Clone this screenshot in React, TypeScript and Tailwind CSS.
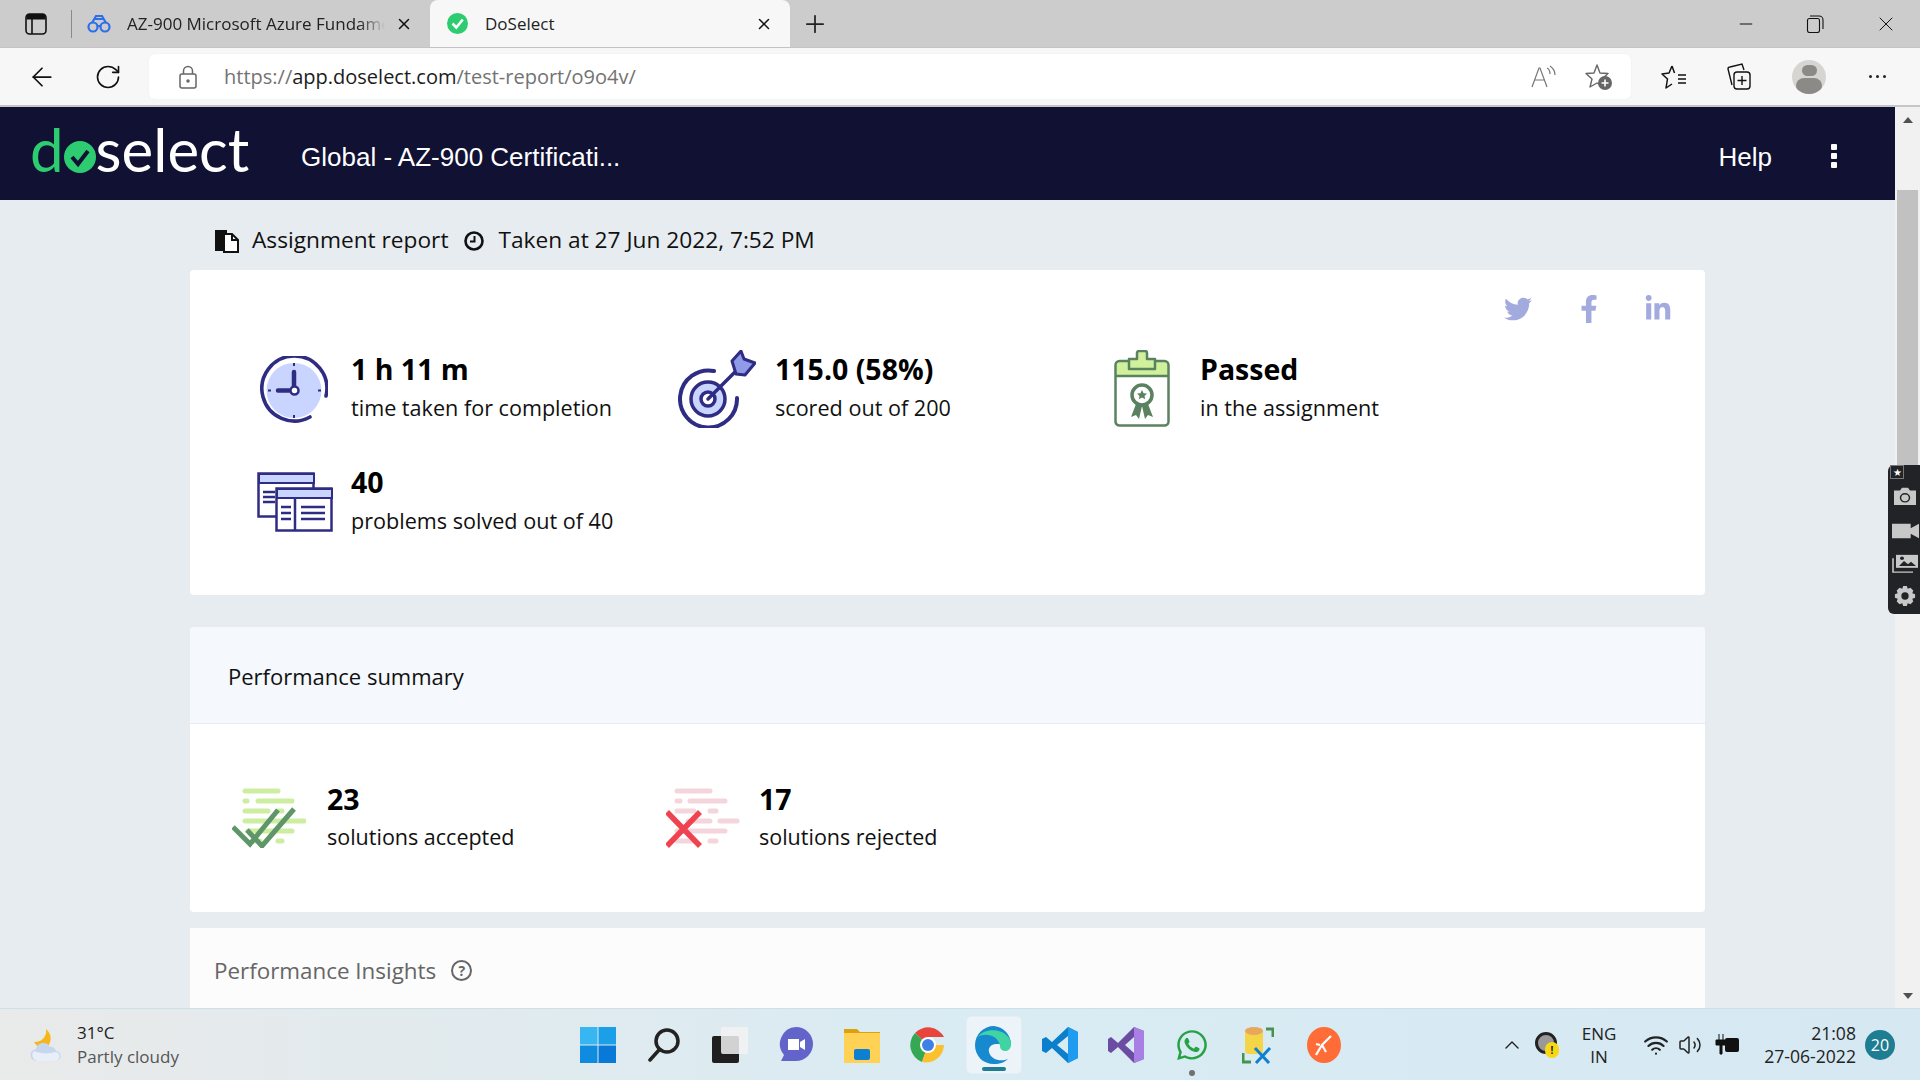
import React from "react";
import {ArrowLeft, RotateCw, X, Plus, Minus, ChevronUp, Volume2, Wifi} from "lucide-react";
import {FaTwitter, FaFacebookF, FaLinkedinIn, FaWhatsapp} from "react-icons/fa";

const INK = "#2f2c84";
const PALE = "#c9d5ff";

const ClockIcon = () => (
  <svg width="68" height="69" viewBox="0 0 68 69" fill="none">
    <circle cx="34" cy="34.5" r="27.5" fill={PALE} />
    <path d="M50 61 A32.500 32.500 0 1 1 66 40" stroke={INK} strokeWidth="3.6" strokeLinecap="round" />
    <path d="M34 16v14M18 34.500h11" stroke={INK} strokeWidth="4.500" strokeLinecap="round" />
    <circle cx="34.500" cy="34.500" r="4" fill="#fff" stroke={INK} strokeWidth="2.500" />
    <path d="M34 7v3M34 59v3M8 34.500h3M58 34.500h3" stroke={INK} strokeWidth="2" />
  </svg>
);

const TargetIcon = () => (
  <svg width="78" height="78" viewBox="0 0 78 78" fill="none">
    <circle cx="30" cy="49" r="17" fill={PALE} stroke={INK} strokeWidth="3.500" />
    <circle cx="30" cy="49" r="7" fill="#fff" stroke={INK} strokeWidth="3.500" />
    <path d="M59 48 A28.500 28.500 0 1 1 36 21" stroke={INK} strokeWidth="4" strokeLinecap="round" />
    <path d="M30 49 L58 21" stroke={INK} strokeWidth="3.500" strokeLinecap="round" />
    <path d="M54 11 L63 1 L66 9 L77 13 L67 25 L58 24Z" fill="#8f9be8" stroke={INK} strokeWidth="3" strokeLinejoin="round" />
  </svg>
);

const ClipboardIcon = () => (
  <svg width="56" height="77" viewBox="0 0 56 77" fill="none">
    <path d="M5 11h46a3 3 0 0 1 3 3v12H2V14a3 3 0 0 1 3-3z" fill="#d0f09b" />
    <rect x="1.500" y="11" width="53" height="64.500" rx="4" stroke="#5a8260" strokeWidth="2.500" />
    <path d="M2 26h52" stroke="#5a8260" strokeWidth="2.500" />
    <path d="M15 19V9h8V3a2 2 0 0 1 2-2h6a2 2 0 0 1 2 2v6h8v10z" fill="#d0f09b" stroke="#5a8260" strokeWidth="2.500" strokeLinejoin="round" />
    <circle cx="28" cy="45" r="10" fill="#fff" stroke="#5a8260" strokeWidth="3.500" />
    <path d="M28 40l1.600 3.200 3.400.4-2.500 2.300.7 3.400-3.200-1.700-3.200 1.700.7-3.400-2.500-2.300 3.400-.4z" fill="#5a8260" />
    <path d="M22 54l-5 13 5-2 3 4 3-13 3 13 3-4 5 2-5-13z" fill="#5a8260" />
  </svg>
);

const WindowsIcon = () => (
  <svg width="76" height="60" viewBox="0 0 76 60" fill="none">
    <rect x="1.500" y="1.500" width="55" height="43" fill="#fff" stroke={INK} strokeWidth="2.500" />
    <rect x="2" y="2" width="55" height="9" fill={PALE} stroke={INK} strokeWidth="2" />
    <path d="M6 20h12M6 25h12M6 30h12" stroke={INK} strokeWidth="2.500" />
    <rect x="19.500" y="16.500" width="55" height="42" fill="#fff" stroke={INK} strokeWidth="2.500" />
    <rect x="20" y="17" width="55" height="9" fill={PALE} stroke={INK} strokeWidth="2" />
    <path d="M38 27v31M24 35h10M24 41h10M24 47h10M44 35h24M44 41h24M44 47h24" stroke={INK} strokeWidth="2.500" />
  </svg>
);

const AcceptedIcon = () => (
  <svg width="74" height="60" viewBox="0 0 74 60" fill="none">
    <path
      d="M13 3h33M13 13h2M26 13h34M13 23h23M46 23h4M13 33h59M16 43h44M22 53h6M46 53h4"
      stroke="#cdeea0"
      strokeWidth="5"
      strokeLinecap="round"
    />
    <path d="M1 39l17 17 28-34M15 42l15 16 32-37" stroke="#5f9669" strokeWidth="5" />
  </svg>
);

const RejectedIcon = () => (
  <svg width="74" height="60" viewBox="0 0 74 60" fill="none">
    <path
      d="M11 3h33M11 13h3M24 13h35M11 23h17M44 23h6M22 33h22M54 33h17M11 43h48M11 53h17M44 53h6"
      stroke="#f5d5dc"
      strokeWidth="5"
      strokeLinecap="round"
    />
    <path d="M1 24l33 34M34 24L1 58" stroke="#ef4350" strokeWidth="5.500" />
  </svg>
);

const Stat = ({icon, value, label}: {icon: React.ReactNode; value: string; label: string}) => (
  <div className="flex items-center h-[113px]">
    <div className="w-[94px] shrink-0 flex justify-start">{icon}</div>
    <div className="flex flex-col gap-[10px] -mt-[1px]">
      <div className="text-[28.5px] leading-[30px] font-bold text-black">{value}</div>
      <div className="text-[21.6px] leading-[28px] text-[#111]">{label}</div>
    </div>
  </div>
);

const SummaryStat = ({icon, value, label, width}: {icon: React.ReactNode; value: string; label: string; width: string}) => (
  <div className={`flex items-center ${width}`}>
    <div className="w-[95px] shrink-0">{icon}</div>
    <div className="flex flex-col gap-[9px] -mt-[2px]">
      <div className="text-[28.5px] leading-[30px] font-bold text-black">{value}</div>
      <div className="text-[21.5px] leading-[28px] text-[#111]">{label}</div>
    </div>
  </div>
);

const TabBar = () => (
  <div className="h-[48px] bg-[#cccccc] flex items-end shrink-0 border-b border-[#c4c4c4]">
    <div className="h-full w-[71px] flex items-center pl-[25px] border-r-0">
      <svg width="22" height="22" viewBox="0 0 22 22" fill="none">
        <rect x="1" y="1" width="20" height="20" rx="3.500" stroke="#111" strokeWidth="1.600" />
        <path d="M1.500 3.500a2.500 2.500 0 0 1 2.500-2.500h14a2.500 2.500 0 0 1 2.500 2.500v3h-19z" fill="#111" />
        <path d="M7 6v15" stroke="#111" strokeWidth="1.600" />
      </svg>
    </div>
    <div className="h-[28px] w-px bg-[#8a8a8a] self-center" />
    <div className="h-full w-[358px] flex items-center pl-[15px] pr-[17px]">
      <svg width="24" height="20" viewBox="0 0 24 20" fill="none" stroke="#2d6fe8" strokeWidth="2.200">
        <circle cx="6" cy="13" r="4.500" />
        <circle cx="18" cy="13" r="4.500" />
        <path d="M10 12h4M5 9l4-7h6l4 7M8 5h8" />
      </svg>
      <div className="ml-[16px] w-[258px] overflow-hidden whitespace-nowrap text-[17px] text-[#222] [mask-image:linear-gradient(to_right,black_90%,transparent)]">AZ-900 Microsoft Azure Fundamentals</div>
      <X size={18} strokeWidth={2} className="ml-auto text-[#111]" />
    </div>
    <div className="h-full w-[360px] bg-[#f7f7f7] rounded-t-[8px] flex items-center pl-[17px] pr-[17px]">
      <svg width="21" height="21" viewBox="0 0 21 21">
        <circle cx="10.500" cy="10.500" r="10.500" fill="#2ecc71" />
        <path d="M5.500 10.500l3.800 4 6.500-8" stroke="#fff" strokeWidth="2.600" fill="none" />
      </svg>
      <span className="ml-[17px] text-[17px] text-[#222]">DoSelect</span>
      <X size={18} strokeWidth={2} className="ml-auto text-[#111]" />
    </div>
    <div className="h-full flex items-center ml-[11px]">
      <Plus size={28} strokeWidth={1.5} className="text-[#222]" />
    </div>
    <div className="h-full flex items-center ml-auto pr-[22px]">
      <Minus size={20} strokeWidth={1.2} className="text-[#111]" />
      <svg className="ml-[50px]" width="18" height="18" viewBox="0 0 18 18" fill="none" stroke="#111" strokeWidth="1.100">
        <rect x="1.500" y="3.500" width="12" height="14" rx="2" />
        <path d="M4 1h9a4 4 0 0 1 4 4v9" />
      </svg>
      <X size={24} strokeWidth={1} className="ml-[50px] text-[#111]" />
    </div>
  </div>
);

const ToolBar = () => (
  <div className="h-[59px] bg-[#f7f7f7] flex items-center shrink-0 border-b-2 border-[#c6c6c6]">
    <ArrowLeft size={30} strokeWidth={1.4} className="ml-[27px] text-[#111]" />
    <RotateCw size={28} strokeWidth={1.4} className="ml-[37px] text-[#111]" />
    <div className="ml-[27px] w-[1482px] h-[45px] bg-white rounded-[6px] flex items-center pl-[30px] pr-[18px] shadow-[0_0_2px_rgba(0,0,0,0.06)]">
      <svg width="18" height="24" viewBox="0 0 18 24" fill="none" stroke="#666" strokeWidth="1.500">
        <rect x="1" y="9" width="16" height="14" rx="2" />
        <path d="M4.500 9V6a4.500 4.500 0 0 1 9 0v3" />
        <circle cx="9" cy="16" r="1" fill="#666" />
      </svg>
      <div className="ml-[27px] text-[20px] whitespace-nowrap text-[#737373]">
        https://<span className="text-[#1c1c1c]">app.doselect.com</span>/test-report/o9o4v/
      </div>
      <div className="ml-auto flex items-center gap-[28px]">
        <svg width="26" height="24" viewBox="0 0 26 24" fill="none" stroke="#777" strokeWidth="1.200">
          <path d="M1 22L8 3h1l7 19M4 15h10M16 3c2 1 3 4 3 6M19 1c3 2 5 5 5 9" />
        </svg>
        <svg width="28" height="28" viewBox="0 0 28 28" fill="none">
          <path d="M12 2l3 8 8 .5-6 5.500 2 8-7-4-7 4 2-8-6-5.500 8-.5z" stroke="#666" strokeWidth="1.400" strokeLinejoin="round" />
          <circle cx="20" cy="20" r="7" fill="#666" />
          <path d="M20 16.500v7M16.500 20h7" stroke="#fff" strokeWidth="1.600" />
        </svg>
      </div>
    </div>
    <svg className="ml-[30px]" width="26" height="26" viewBox="0 0 26 26" fill="none" stroke="#111" strokeWidth="1.500">
      <path d="M11 2l2.500 7M11 2L8 9l-7 1 5.500 5L5 24l6-4" strokeLinejoin="round" />
      <path d="M17 11h8M17 15h8M17 19h8" />
    </svg>
    <svg className="ml-[39px]" width="26" height="28" viewBox="0 0 26 28" fill="none" stroke="#111" strokeWidth="1.400">
      <path d="M6 22 2 6a2 2 0 0 1 2-2l12-3 2 6" />
      <rect x="8" y="9" width="16" height="17" rx="3" />
      <path d="M16 13v9M11.500 17.500h9" />
    </svg>
    <div className="ml-[40px] w-[34px] h-[34px] rounded-full bg-[#d6d5d1] overflow-hidden flex flex-col items-center">
      <div className="mt-[5px] w-[15px] h-[15px] rounded-full bg-[#8c8a87]" />
      <div className="mt-[2px] w-[26px] h-[20px] rounded-full bg-[#8c8a87]" />
    </div>
    <div className="ml-[43px] flex gap-[4px]">
      <i className="block w-[3px] h-[3px] rounded-full bg-[#222]" />
      <i className="block w-[3px] h-[3px] rounded-full bg-[#222]" />
      <i className="block w-[3px] h-[3px] rounded-full bg-[#222]" />
    </div>
  </div>
);

const AppHeader = () => (
  <header className="h-[93px] bg-[#101133] flex items-center pl-[30px] pr-[58px] shrink-0">
    <div className="flex items-center text-[60px] leading-none font-normal font-['Lato',sans-serif] w-[271px] -mt-[10px]">
      <span className="text-[#2ecc71]">d</span>
      <svg className="mt-[16px]" width="32" height="32" viewBox="0 0 32 32">
        <circle cx="16" cy="16" r="16" fill="#2ecc71" />
        <path d="M8 16l6 7 10-13" stroke="#101133" strokeWidth="4" fill="none" />
      </svg>
      <span className="text-white">select</span>
    </div>
    <div className="mt-[7px] text-[26px] text-white font-['Liberation_Sans',sans-serif]">Global - AZ-900 Certificati...</div>
    <div className="mt-[7px] ml-auto text-[26px] text-white font-['Liberation_Sans',sans-serif]">Help</div>
    <div className="mt-[5px] ml-[59px] flex flex-col gap-[3px]">
      <i className="block w-[6px] h-[6px] rounded-[1px] bg-white" />
      <i className="block w-[6px] h-[6px] rounded-[1px] bg-white" />
      <i className="block w-[6px] h-[6px] rounded-[1px] bg-white" />
    </div>
  </header>
);

const ReportBody = () => (
  <div className="flex-1 bg-[#e7ecf0] px-[190px] overflow-hidden font-['Open_Sans',sans-serif]">
    <div className="h-[70px] pt-[11px] flex items-center pl-[24px] text-[22.7px] text-[#111]">
      <svg width="25" height="24" viewBox="0 0 25 24">
        <path d="M1 1h12v3H9v18H1z" fill="#111" />
        <path d="M10 5h8l6 6v12H10z" fill="#fff" stroke="#111" strokeWidth="2" />
        <path d="M18 5v6h6" fill="none" stroke="#111" strokeWidth="2" />
      </svg>
      <span className="ml-[13px]">Assignment report</span>
      <svg className="ml-[16px]" width="20" height="20" viewBox="0 0 20 20" fill="none" stroke="#111">
        <circle cx="10" cy="10" r="8.500" strokeWidth="2.600" />
        <path d="M10.500 5v5.500H6" strokeWidth="2" />
      </svg>
      <span className="ml-[14px]">Taken at 27 Jun 2022, 7:52 PM</span>
    </div>

    <section className="relative h-[325px] bg-white rounded-[4px] pl-[67px] pt-[62px] mb-[32px]">
      <div className="absolute top-[25px] right-[33px] flex items-center text-[#a3aadd]">
        <FaTwitter size={28} />
        <FaFacebookF size={28} className="ml-[43px]" />
        <FaLinkedinIn size={28} className="ml-[41px]" />
      </div>
      <div className="grid grid-cols-[424px_425px_1fr]">
        <Stat icon={<div className="pl-[3px] pt-[3px]"><ClockIcon /></div>} value="1 h 11 m" label="time taken for completion" />
        <Stat icon={<div className="ml-[-3px]"><TargetIcon /></div>} value="115.0 (58%)" label="scored out of 200" />
        <Stat icon={<div className="pl-[8px]"><ClipboardIcon /></div>} value="Passed" label="in the assignment" />
        <Stat icon={<WindowsIcon />} value="40" label="problems solved out of 40" />
      </div>
    </section>

    <section className="h-[285px] bg-white rounded-[4px] mb-[16px] overflow-hidden">
      <div className="h-[97px] pt-[2px] bg-[#f5f8fc] border-b border-[#e8ecf0] flex items-center pl-[38px] text-[22px] text-[#111]">
        Performance summary
      </div>
      <div className="h-[188px] pl-[42px] flex items-center">
        <SummaryStat icon={<AcceptedIcon />} value="23" label="solutions accepted" width="w-[432px]" />
        <SummaryStat icon={<div className="pl-[2px]"><RejectedIcon /></div>} value="17" label="solutions rejected" width="w-[432px]" />
      </div>
    </section>

    <section className="h-[100px] bg-[#fcfcfc] pl-[24px] pt-[26px] flex items-start text-[22.4px] leading-[34px] text-[#666]">
      Performance Insights
      <span className="ml-[15px] mt-[6px] w-[21px] h-[21px] rounded-full border-2 border-[#666] flex items-center justify-center text-[14px] leading-none font-bold">?</span>
    </section>
  </div>
);

const ScrollBar = () => (
  <div className="w-[25px] bg-[#f1f1f1] flex flex-col items-center shrink-0">
    <div className="mt-[10px] w-0 h-0 border-x-[5px] border-x-transparent border-b-[6px] border-b-[#505050]" />
    <div className="mt-[67px] w-[21px] h-[300px] bg-[#c1c1c1]" />
    <div className="mt-auto mb-[9px] w-0 h-0 border-x-[5px] border-x-transparent border-t-[6px] border-t-[#505050]" />
  </div>
);

const CaptureWidget = () => (
  <div className="absolute right-0 top-[358px] w-[32px] h-[149px] bg-[#212327] rounded-l-[6px] flex flex-col items-center pl-[2px]">
    <div className="self-start w-[14px] h-[14px] border border-[#777] flex items-center justify-center text-[10px] leading-none text-white">★</div>
    <svg className="mt-[7px]" width="24" height="20" viewBox="0 0 24 22" preserveAspectRatio="none">
      <path d="M1 5h6l2-3h6l2 3h6v16H1z" fill="#c8c8c8" />
      <circle cx="12" cy="13" r="4.500" fill="none" stroke="#212327" strokeWidth="1.500" />
    </svg>
    <svg className="mt-[16px]" width="27" height="18" viewBox="0 0 26 20" preserveAspectRatio="none">
      <path d="M0 2h18v5l8-5v16l-8-5v5H0z" fill="#c8c8c8" />
    </svg>
    <svg className="mt-[14px]" width="26" height="19" viewBox="0 0 26 22" preserveAspectRatio="none" fill="none">
      <rect x="4" y="1" width="22" height="15" fill="#c8c8c8" />
      <path d="M7 14l5-6 4 4 3-3 5 5z" fill="#212327" />
      <circle cx="10" cy="5" r="2" fill="#212327" />
      <path d="M1 5v16h20" stroke="#c8c8c8" strokeWidth="1.600" />
    </svg>
    <svg className="mt-[12px]" width="22" height="22" viewBox="0 0 24 24">
      <path d="M10 1h4l1 3 3-1 3 3-1 3 3 1v4l-3 1 1 3-3 3-3-1-1 3h-4l-1-3-3 1-3-3 1-3-3-1v-4l3-1-1-3 3-3 3 1z" fill="#c8c8c8" />
      <circle cx="12" cy="12" r="4" fill="#212327" />
    </svg>
  </div>
);

const TaskIcon = ({children, active}: {children: React.ReactNode; active?: boolean}) => (
  <div className="relative w-[66px] h-[58px] flex items-center justify-center">
    {active && <i className="absolute inset-y-0 left-[5px] right-[5px] rounded-[5px] bg-[#edf4f9] border border-[#e3edf3]" />}
    <div className="relative flex items-center justify-center">{children}</div>
    {active && <i className="absolute bottom-[3px] w-[24px] h-[4px] rounded-full bg-[#1f7d93]" />}
  </div>
);

const TaskBar = () => (
  <footer className="h-[72px] shrink-0 flex items-center border-t border-[#cfdfe8] bg-gradient-to-r from-[#e9eaea] via-[#d9ebf3] to-[#d6e8f1] font-['Open_Sans',sans-serif] text-[#222]">
    <div className="w-[565px] flex items-center pl-[30px]">
      <svg width="34" height="34" viewBox="0 0 34 34">
        <path d="M16 1a11 11 0 0 1-12 13 12 12 0 0 0 12 6 12 12 0 0 0 0-19z" fill="#f5b51d" />
        <path d="M7 33a6 6 0 0 1-1-12 7.500 7.500 0 0 1 14-2 5 5 0 0 1 6 4 5 5 0 0 1-1 10z" fill="#c6d6ee" />
        <path d="M7 33a6 6 0 0 1-3-10c6 3 16 3 21 1a4.500 4.500 0 0 1 0 9z" fill="#e8eff9" />
      </svg>
      <div className="ml-[13px] flex flex-col text-[17px] leading-[24px]">
        <span>31°C</span>
        <span className="text-[#555]">Partly cloudy</span>
      </div>
    </div>
    <div className="flex items-center">
      <TaskIcon>
        <svg width="36" height="36" viewBox="0 0 36 36">
          <rect width="17.500" height="17.500" fill="#38b6f1" />
          <rect x="18.500" width="17.500" height="17.500" fill="#1a9fe8" />
          <rect y="18.500" width="17.500" height="17.500" fill="#0f8be0" />
          <rect x="18.500" y="18.500" width="17.500" height="17.500" fill="#0879d6" />
        </svg>
      </TaskIcon>
      <TaskIcon>
        <svg width="34" height="34" viewBox="0 0 34 34" fill="none" stroke="#222" strokeWidth="3.500" strokeLinecap="round">
          <circle cx="20" cy="13" r="11" />
          <path d="M12 22L3 32" />
        </svg>
      </TaskIcon>
      <TaskIcon>
        <svg width="36" height="36" viewBox="0 0 36 36">
          <rect x="0" y="9" width="27" height="27" rx="2" fill="#1f1f1f" />
          <rect x="9" y="0" width="27" height="27" rx="2" fill="#f2f2f2" fillOpacity="0.85" />
        </svg>
      </TaskIcon>
      <TaskIcon>
        <svg width="34" height="36" viewBox="0 0 34 36">
          <path d="M17 0a17 17 0 0 1 0 34H2l3-6A17 17 0 0 1 17 0z" fill="#6264c9" />
          <path d="M9 12h11v11H9zM21 15l5-3v11l-5-3z" fill="#fff" />
        </svg>
      </TaskIcon>
      <TaskIcon>
        <svg width="36" height="36" viewBox="0 0 36 36">
          <path d="M0 2h13l3 3h20v6H0z" fill="#dea10d" />
          <rect y="6" width="36" height="30" fill="#ffd255" />
          <rect x="10" y="22" width="16" height="11" rx="2" fill="#0f7fd1" />
        </svg>
      </TaskIcon>
      <TaskIcon>
        <svg width="36" height="36" viewBox="0 0 36 36">
          <path d="M18 18L5 6A18 18 0 0 1 34 10H18z" fill="#e8453c" />
          <path d="M18 18L5 6A18 18 0 0 0 12 35z" fill="#34a853" />
          <path d="M18 18h16A18 18 0 0 1 12 35z" fill="#fbc02d" />
          <circle cx="18" cy="18" r="8" fill="#fff" />
          <circle cx="18" cy="18" r="6" fill="#3f7fe8" />
        </svg>
      </TaskIcon>
      <TaskIcon active>
        <svg width="38" height="38" viewBox="0 0 38 38">
          <path d="M19 0a19 19 0 0 0-19 19c0 11 8 19 19 19 6 0 11-2 14-5-7 3-17 1-19-7-1-4 2-8 7-8h15A19 19 0 0 0 19 0z" fill="#1689cf" />
          <path d="M3 11C8 3 26 1 34 12c4 6 2 12-3 13-4 0-6-2-6-5C24 9 9 6 3 11z" fill="#3fd4a2" />
        </svg>
      </TaskIcon>
      <TaskIcon>
        <svg width="36" height="36" viewBox="0 0 36 36">
          <path d="M26 0l10 5v26l-10 5L10 21l-6 5-4-2v-12l4-2 6 5z" fill="#0b7fcc" />
          <path d="M26 9L15 18l11 9z" fill="#d9ebf3" />
          <path d="M26 0l10 5v26l-10 5z" fill="#1f9cf0" />
        </svg>
      </TaskIcon>
      <TaskIcon>
        <svg width="36" height="36" viewBox="0 0 36 36">
          <path d="M26 0l10 4v28l-10 4L10 20l-7 6-3-2V12l3-2 7 6z" fill="#6c4ba3" />
          <path d="M26 10l-9 8 9 8z" fill="#d9ebf3" />
          <path d="M26 0l10 4v28l-10 4z" fill="#a97fe6" />
        </svg>
      </TaskIcon>
      <div className="relative w-[66px] h-[58px] flex items-center justify-center">
        <FaWhatsapp size={34} className="text-[#25a244]" />
        <i className="absolute bottom-[-2px] w-[6px] h-[6px] rounded-full bg-[#707070]" />
      </div>
      <TaskIcon>
        <svg width="32" height="38" viewBox="0 0 32 38" fill="none">
          <rect x="3" y="2" width="18" height="26" rx="4" fill="#f4d548" />
          <ellipse cx="12" cy="5" rx="9" ry="4" fill="#e8a75a" />
          <path d="M24 3h7v8M1 27v9h8" stroke="#45944a" strokeWidth="3" />
          <path d="M13 22l14 15M28 22L14 37" stroke="#0f7fd1" strokeWidth="3" />
        </svg>
      </TaskIcon>
      <TaskIcon>
        <svg width="34" height="36" viewBox="0 0 34 36">
          <ellipse cx="17" cy="18" rx="17" ry="18" fill="#ff6c37" />
          <path d="M9 28l6-10 9-9M15 18l4 7M13 18l-4-1" stroke="#fff" strokeWidth="2.200" fill="none" />
        </svg>
      </TaskIcon>
    </div>
    <div className="flex-1 flex items-center pl-[143px]">
      <ChevronUp size={24} strokeWidth={1.4} />
      <div className="relative ml-[11px] w-[24px] h-[26px]">
        <div className="w-[22px] h-[22px] rounded-full border-[3px] border-[#222] bg-[#999]" />
        <div className="absolute right-0 bottom-0 w-[14px] h-[16px] rounded-full bg-[#f7d716] text-[10px] leading-[16px] text-center font-bold">!</div>
      </div>
      <div className="ml-[18px] w-[44px] text-center text-[17px] leading-[23px]">ENG<br />IN</div>
      <Wifi size={26} strokeWidth={2} className="ml-[22px]" />
      <Volume2 size={24} strokeWidth={1.5} className="ml-[9px]" />
      <svg className="ml-[13px]" width="26" height="22" viewBox="0 0 26 22" fill="#111">
        <path d="M4 0v6M8 0v6M1 6h10v5H7v9H5v-9H1z" stroke="#111" strokeWidth="1" />
        <rect x="10" y="4" width="14" height="14" rx="2" />
      </svg>
      <div className="ml-auto text-[17.6px] leading-[23px] text-right">21:08<br />27-06-2022</div>
      <div className="ml-[9px] mr-[25px] w-[30px] h-[30px] rounded-full bg-[#1f7d93] text-white text-[16px] flex items-center justify-center">20</div>
    </div>
  </footer>
);

const App: React.FC = () => {
  return (
    <div className="w-[1920px] h-[1080px] flex flex-col overflow-hidden bg-[#e7ecf0] font-['Open_Sans',sans-serif]">
      <TabBar />
      <ToolBar />
      <div className="relative flex-1 flex min-h-0">
        <div className="flex-1 flex flex-col min-w-0">
          <AppHeader />
          <ReportBody />
        </div>
        <ScrollBar />
        <CaptureWidget />
      </div>
      <TaskBar />
    </div>
  );
};

export default App;
